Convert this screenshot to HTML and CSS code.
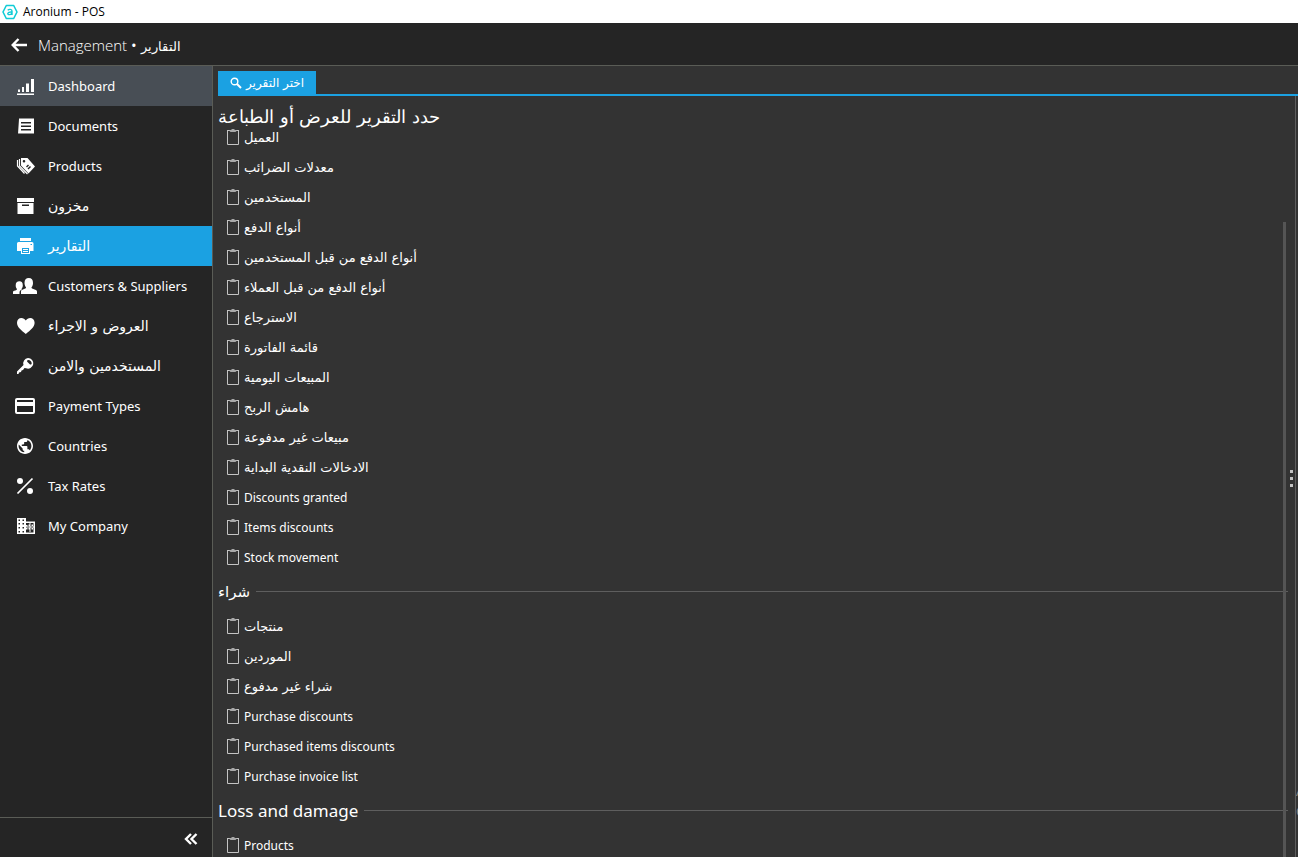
FILE: index.html
```html
<!DOCTYPE html>
<html lang="en">
<head>
<meta charset="UTF-8">
<meta name="viewport" content="width=device-width, initial-scale=1.0">
<title>Aronium - POS</title>
<link rel="stylesheet" href="styles.css">
</head>

<body>

<!-- Shared clipboard icon for the report rows -->
<svg class="defs" aria-hidden="true">
  <symbol id="clip" viewBox="0 0 12 16">
    <path d="M.5 1.500V15.500H11.500V1.500M0 1.500H3M12 1.500H9" fill="none" stroke="#c4c4c4"/>
    <path d="M2.500 1H4.500V0h3v1h2v1l-1 1h-5l-1-1z" fill="#a8a8a8"/>
  </symbol>
</svg>

<div class="titlebar">
  <svg width="16" height="16" viewBox="0 0 16 16" fill="none" stroke="#12ccd6"><path d="M4.300 1.500h7.400L15 8l-3.300 6.500H4.300L1 8z" stroke-width="1.600" stroke-linejoin="round"/><path d="M5.700 6.200C7 5 10 5 10 7v4M10 8C5 7.500 4.800 10.800 7.500 10.600 9 10.500 10 9.500 10 8.500" stroke-width="1.400"/></svg>
  <span>Aronium - POS</span>
</div>

<header>
  <button class="back" aria-label="Back">
    <svg width="16" height="14" viewBox="0 0 16 14" fill="none" stroke="#fff" stroke-width="2.400"><path d="M7.500 1L1.700 7l5.800 6M2 7h14"/></svg>
  </button>
  <h1>Management <b>•</b> <span lang="ar">التقارير</span></h1>
</header>

<div class="layout">
  <nav class="sidebar">
    <a class="hover" href="#">
      <svg viewBox="0 0 24 24"><path d="M4 19.500h17V21H4zM5 15.500h2v2.500H5zM9 13h2v5H9zM13 9.500h3V18h-3zM18 5h3v13h-3z"/></svg>
      <span>Dashboard</span>
    </a>
    <a href="#">
      <svg viewBox="0 0 24 24"><path fill-rule="evenodd" d="M6 5l1-1 1 1 1-1 1 1 1-1 1 1 1-1 1 1 1-1 1 1 1-1 1 1 1-1 1 1 1-1v16l-1-1-1 1-1-1-1 1-1-1-1 1-1-1-1 1-1-1-1 1-1-1-1 1-1-1-1 1-1-1-1 1zM8 8v1.500h10V8zM8 11.500V13h10v-1.500zM8 15v1.500h10V15z"/></svg>
      <span>Documents</span>
    </a>
    <a href="#">
      <svg viewBox="0 0 24 24"><path fill-rule="evenodd" d="M8 4h6.500l7.500 8.500-6.500 7L8 11.500zM11 6a1.300 1.300 0 1 0 0 2.600A1.300 1.300 0 0 0 11 6zM15 10.500l-2 2 1 1 2-2zM17 12l-2.500 2.500 1 1L18 13z"/><path d="M6.500 5v7l8 8M4.500 6v6l7 7.500" fill="none" stroke="#fff" stroke-width="1.200"/></svg>
      <span>Products</span>
    </a>
    <a href="#">
      <svg viewBox="0 0 24 24"><path fill-rule="evenodd" d="M4 4h17v4H4zM4.500 9h16v11h-16zM9 10.500V12h7v-1.500z"/></svg>
      <span lang="ar">مخزون</span>
    </a>
    <a class="active" href="#">
      <svg viewBox="0 0 24 24"><path fill-rule="evenodd" d="M7 4h11v3H7zM5.500 8h13.500a1.500 1.500 0 0 1 1.500 1.500V17H17v3H8v-3H4V9.500A1.500 1.500 0 0 1 5.500 8zM9 14v5h7v-5zM17.500 10v1H19v-1z"/><path d="M10 15h5v1h-5zM10 17h5v1h-5z"/></svg>
      <span lang="ar">التقارير</span>
    </a>
    <a href="#">
      <svg viewBox="0 0 24 24"><path d="M8 20v-2.500c0-1.200 1-1.700 2.500-2.200 1.800-.6 2.500-1 2.500-2-1-1-1.500-2.700-1.500-4.300C11.500 5.500 13 4 15.800 4S20 5.500 20 9c0 1.600-.5 3.300-1.500 4.300 0 1 .7 1.400 2.500 2 1.500.5 3 1 3 2.200V20z"/><path d="M0 20v-1.800c0-1 .8-1.300 2.200-1.700 1.300-.4 1.800-.8 1.800-1.500-1-1-1.300-2.200-1.300-3.500C2.700 8.500 4 7.200 6.500 7.200c2.300 0 3.300 1.300 3.300 4.300 0 1.300-.5 2.600-1.200 3.300 0 .4.100.6.400.8-1.700.7-2.500 1.500-2.500 2.900V20z"/></svg>
      <span>Customers &amp; Suppliers</span>
    </a>
    <a href="#">
      <svg viewBox="0 0 24 24"><path d="M12.800 20C8 16 4 13 4 8.700 4 6 6 4 8.400 4c1.800 0 3.400 1 4.400 2.600C13.800 5 15.400 4 17.200 4 19.600 4 21.600 6 21.600 8.700c0 4.300-4 7.300-8.800 11.300z"/></svg>
      <span lang="ar">العروض و الاجراء</span>
    </a>
    <a href="#">
      <svg viewBox="0 0 24 24"><path fill-rule="evenodd" d="M15 4a5.300 5.300 0 1 1-2 10.200L11.500 14 10 16l-1.500.5L8 18l-2 .5L5.500 20H4v-2.500l6.500-6.500A5.300 5.300 0 0 1 15 4zM15.500 6c-1.500 0-2 1-1 2l2 2c1 1 2.200.5 2.200-.8 0-1.600-1.700-3.200-3.200-3.200z"/></svg>
      <span lang="ar">المستخدمين والامن</span>
    </a>
    <a href="#">
      <svg viewBox="0 0 24 24"><path fill-rule="evenodd" d="M4 4h16a2 2 0 0 1 2 2v12a2 2 0 0 1-2 2H4a2 2 0 0 1-2-2V6a2 2 0 0 1 2-2zM4 6v2h16V6zM4 12v6h16v-6z"/></svg>
      <span>Payment Types</span>
    </a>
    <a href="#">
      <svg viewBox="0 0 24 24"><path transform="translate(2.400 2.400) scale(.8)" d="M12 2C6.480 2 2 6.480 2 12s4.480 10 10 10 10-4.480 10-10S17.520 2 12 2zm-1 17.930c-3.950-.49-7-3.850-7-7.930 0-.62.080-1.210.210-1.790L9 15v1c0 1.100.9 2 2 2v1.930zm6.900-2.540c-.26-.81-1-1.390-1.900-1.390h-1v-3c0-.55-.45-1-1-1H8v-2h2c.55 0 1-.45 1-1V7h2c1.100 0 2-.9 2-2v-.41c2.930 1.190 5 4.060 5 7.410 0 2.080-.8 3.970-2.100 5.390z"/></svg>
      <span>Countries</span>
    </a>
    <a href="#">
      <svg viewBox="0 0 24 24"><circle cx="7" cy="7" r="3"/><circle cx="17" cy="17" r="3"/><path d="M19.500 4.500l-15 15" stroke="#fff" stroke-width="1.700"/></svg>
      <span>Tax Rates</span>
    </a>
    <a href="#">
      <svg viewBox="0 0 24 24"><path fill-rule="evenodd" d="M4 4h9v3.500h9V20H4zM5.500 5.500V7H7V5.500zM9.500 5.500V7H11V5.500zM5.500 9v1.500H7V9zM9.500 9v1.500H11V9zM5.500 13v1.500H7V13zM9.500 13v1.500H11V13zM5.500 17v1.500H7V17zM9.500 17v1.500H11V17zM13 9v2h1.500v1.500H13V14h1.500v1.500H13v3h7.500V9z"/><path d="M15.500 10.500h2V12h-2zM18.500 10.500h1.500V12h-1.500zM15.500 14h2v1.500h-2zM18.500 14h1.500v1.500h-1.500zM16.500 9h1v9h-1zM13 12.500h8v1h-8z"/></svg>
      <span>My Company</span>
    </a>
    <div class="sidebar-footer">
      <button aria-label="Collapse menu">
        <svg width="14" height="12" viewBox="0 0 14 12" fill="none" stroke="#fff" stroke-width="2.400"><path d="M7 1L2 6l5 5M12.500 1l-5 5 5 5"/></svg>
      </button>
    </div>
  </nav>

  <main>
    <div class="tabs">
      <button class="tab">
        <svg width="12" height="12" viewBox="0 0 12 12" fill="none" stroke="#fff"><circle cx="4.500" cy="4.500" r="3.300" stroke-width="1.400"/><path d="M7 7l4 4" stroke-width="2"/></svg>
        <span lang="ar">اختر التقرير</span>
      </button>
    </div>

    <div class="content">
      <section class="reports">
        <h2 lang="ar">حدد التقرير للعرض أو الطباعة</h2>
        <div class="report-list">
          <ul>
            <li><a href="#"><svg><use href="#clip"/></svg><span lang="ar">العميل</span></a></li>
            <li><a href="#"><svg><use href="#clip"/></svg><span lang="ar">معدلات الضرائب</span></a></li>
            <li><a href="#"><svg><use href="#clip"/></svg><span lang="ar">المستخدمين</span></a></li>
            <li><a href="#"><svg><use href="#clip"/></svg><span lang="ar">أنواع الدفع</span></a></li>
            <li><a href="#"><svg><use href="#clip"/></svg><span lang="ar">أنواع الدفع من قبل المستخدمين</span></a></li>
            <li><a href="#"><svg><use href="#clip"/></svg><span lang="ar">أنواع الدفع من قبل العملاء</span></a></li>
            <li><a href="#"><svg><use href="#clip"/></svg><span lang="ar">الاسترجاع</span></a></li>
            <li><a href="#"><svg><use href="#clip"/></svg><span lang="ar">قائمة الفاتورة</span></a></li>
            <li><a href="#"><svg><use href="#clip"/></svg><span lang="ar">المبيعات اليومية</span></a></li>
            <li><a href="#"><svg><use href="#clip"/></svg><span lang="ar">هامش الربح</span></a></li>
            <li><a href="#"><svg><use href="#clip"/></svg><span lang="ar">مبيعات غير مدفوعة</span></a></li>
            <li><a href="#"><svg><use href="#clip"/></svg><span lang="ar">الادخالات النقدية البداية</span></a></li>
            <li><a href="#"><svg><use href="#clip"/></svg><span>Discounts granted</span></a></li>
            <li><a href="#"><svg><use href="#clip"/></svg><span>Items discounts</span></a></li>
            <li><a href="#"><svg><use href="#clip"/></svg><span>Stock movement</span></a></li>
          </ul>
          <h3><span lang="ar">شراء</span></h3>
          <ul>
            <li><a href="#"><svg><use href="#clip"/></svg><span lang="ar">منتجات</span></a></li>
            <li><a href="#"><svg><use href="#clip"/></svg><span lang="ar">الموردين</span></a></li>
            <li><a href="#"><svg><use href="#clip"/></svg><span lang="ar">شراء غير مدفوع</span></a></li>
            <li><a href="#"><svg><use href="#clip"/></svg><span>Purchase discounts</span></a></li>
            <li><a href="#"><svg><use href="#clip"/></svg><span>Purchased items discounts</span></a></li>
            <li><a href="#"><svg><use href="#clip"/></svg><span>Purchase invoice list</span></a></li>
          </ul>
          <h3><span>Loss and damage</span></h3>
          <ul>
            <li><a href="#"><svg><use href="#clip"/></svg><span>Products</span></a></li>
          </ul>
        </div>
        <div class="scroll-thumb"></div>
      </section>
      <div class="splitter"><i></i><i></i><i></i></div>
      <aside>
        <p class="watermark">Activate Windows<br>Go to Settings</p>
      </aside>
    </div>
  </main>
</div>

</body>
</html>
```
FILE: styles.css
```css
* { margin: 0; padding: 0; box-sizing: border-box; }
body { font-family: 'Noto Sans', 'DejaVu Sans', sans-serif; font-size: 13px; color: #fff; background-color: #333; height: 100vh; display: flex; flex-direction: column; overflow: hidden; }
a { color: #fff; text-decoration: none; }
button { font: inherit; color: #fff; background: none; border: none; cursor: pointer; }
ul { list-style: none; }
[lang="ar"] { font-family: 'DejaVu Sans', sans-serif; }
.defs { position: absolute; width: 0; height: 0; }

.titlebar { display: flex; align-items: center; gap: 5px; height: 23px; flex-shrink: 0; padding-left: 2px; background-color: #fff; color: #000; font-family: 'Open Sans', sans-serif; font-size: 12px; }

header { display: flex; align-items: center; gap: 11px; height: 43px; flex-shrink: 0; padding: 2px 0 0 11px; background-color: #252525; border-bottom: 1px solid #5a5c56; }
header h1 { font-family: 'Open Sans', sans-serif; font-size: 15px; font-weight: 300; }
header h1 [lang="ar"] { font-size: 13px; }
.back { display: flex; }

.layout { flex: 1; display: flex; min-height: 0; }

.sidebar { width: 213px; flex-shrink: 0; display: flex; flex-direction: column; background-color: #252525; border-right: 1px solid #5a5c56; }
.sidebar a { display: flex; align-items: center; gap: 11px; height: 40px; padding-left: 13px; }
.sidebar a svg { width: 24px; height: 24px; fill: #fff; }
.sidebar a [lang="ar"] { font-size: 14px; }
.sidebar a.hover { background-color: #484e55; }
.sidebar a.active { background-color: #1ba1e2; }
.sidebar-footer { display: flex; justify-content: flex-end; align-items: center; height: 40px; margin-top: auto; padding: 3px 14px 0 0; border-top: 1px solid #5a5c56; }
.sidebar-footer button { display: flex; }

main { flex: 1; display: flex; flex-direction: column; min-width: 0; padding: 5px 0 0 5px; }
.tabs { display: flex; height: 25px; flex-shrink: 0; border-bottom: 2px solid #1ba1e2; }
.tab { display: flex; align-items: center; gap: 4px; padding: 0 12px; font-size: 12px; background-color: #1ba1e2; }

.content { flex: 1; display: flex; min-height: 0; }
.reports { position: relative; flex: 1; display: flex; flex-direction: column; min-width: 0; }
.reports h2 { padding-top: 8px; font-size: 18px; font-weight: 300; line-height: 26px; flex-shrink: 0; }
.report-list { flex: 1; overflow: hidden; min-height: 0; margin-top: -2px; }
/* list is scrolled part way into the first group */
.report-list ul:first-child { margin-top: -6px; }
.report-list li a { display: flex; align-items: center; gap: 5px; height: 30px; padding-left: 9px; font-size: 12px; }
.report-list li [lang="ar"] { font-size: 13px; }
.report-list li svg { width: 12px; height: 16px; }
.report-list h3 { display: flex; align-items: center; gap: 6px; height: 39px; font-size: 17px; font-weight: 400; line-height: 24px; }
.report-list h3 [lang="ar"] { font-size: 15px; }
.report-list h3::after { content: ''; flex: 1; height: 1px; background-color: #5e5e5e; }
.scroll-thumb { position: absolute; top: 126px; right: 2px; bottom: 0; width: 3px; background-color: #555; }

.splitter { display: flex; flex-direction: column; align-items: center; justify-content: center; gap: 4px; width: 7px; padding-top: 3px; }
.splitter i { width: 3px; height: 3px; background-color: #c4c4c4; }
aside { position: relative; width: 3px; border-left: 1px solid #5e5e5e; overflow: hidden; }
.watermark { position: absolute; left: 0; bottom: 36px; font-size: 13px; line-height: 20px; color: #8a8a8a; white-space: nowrap; }
```
